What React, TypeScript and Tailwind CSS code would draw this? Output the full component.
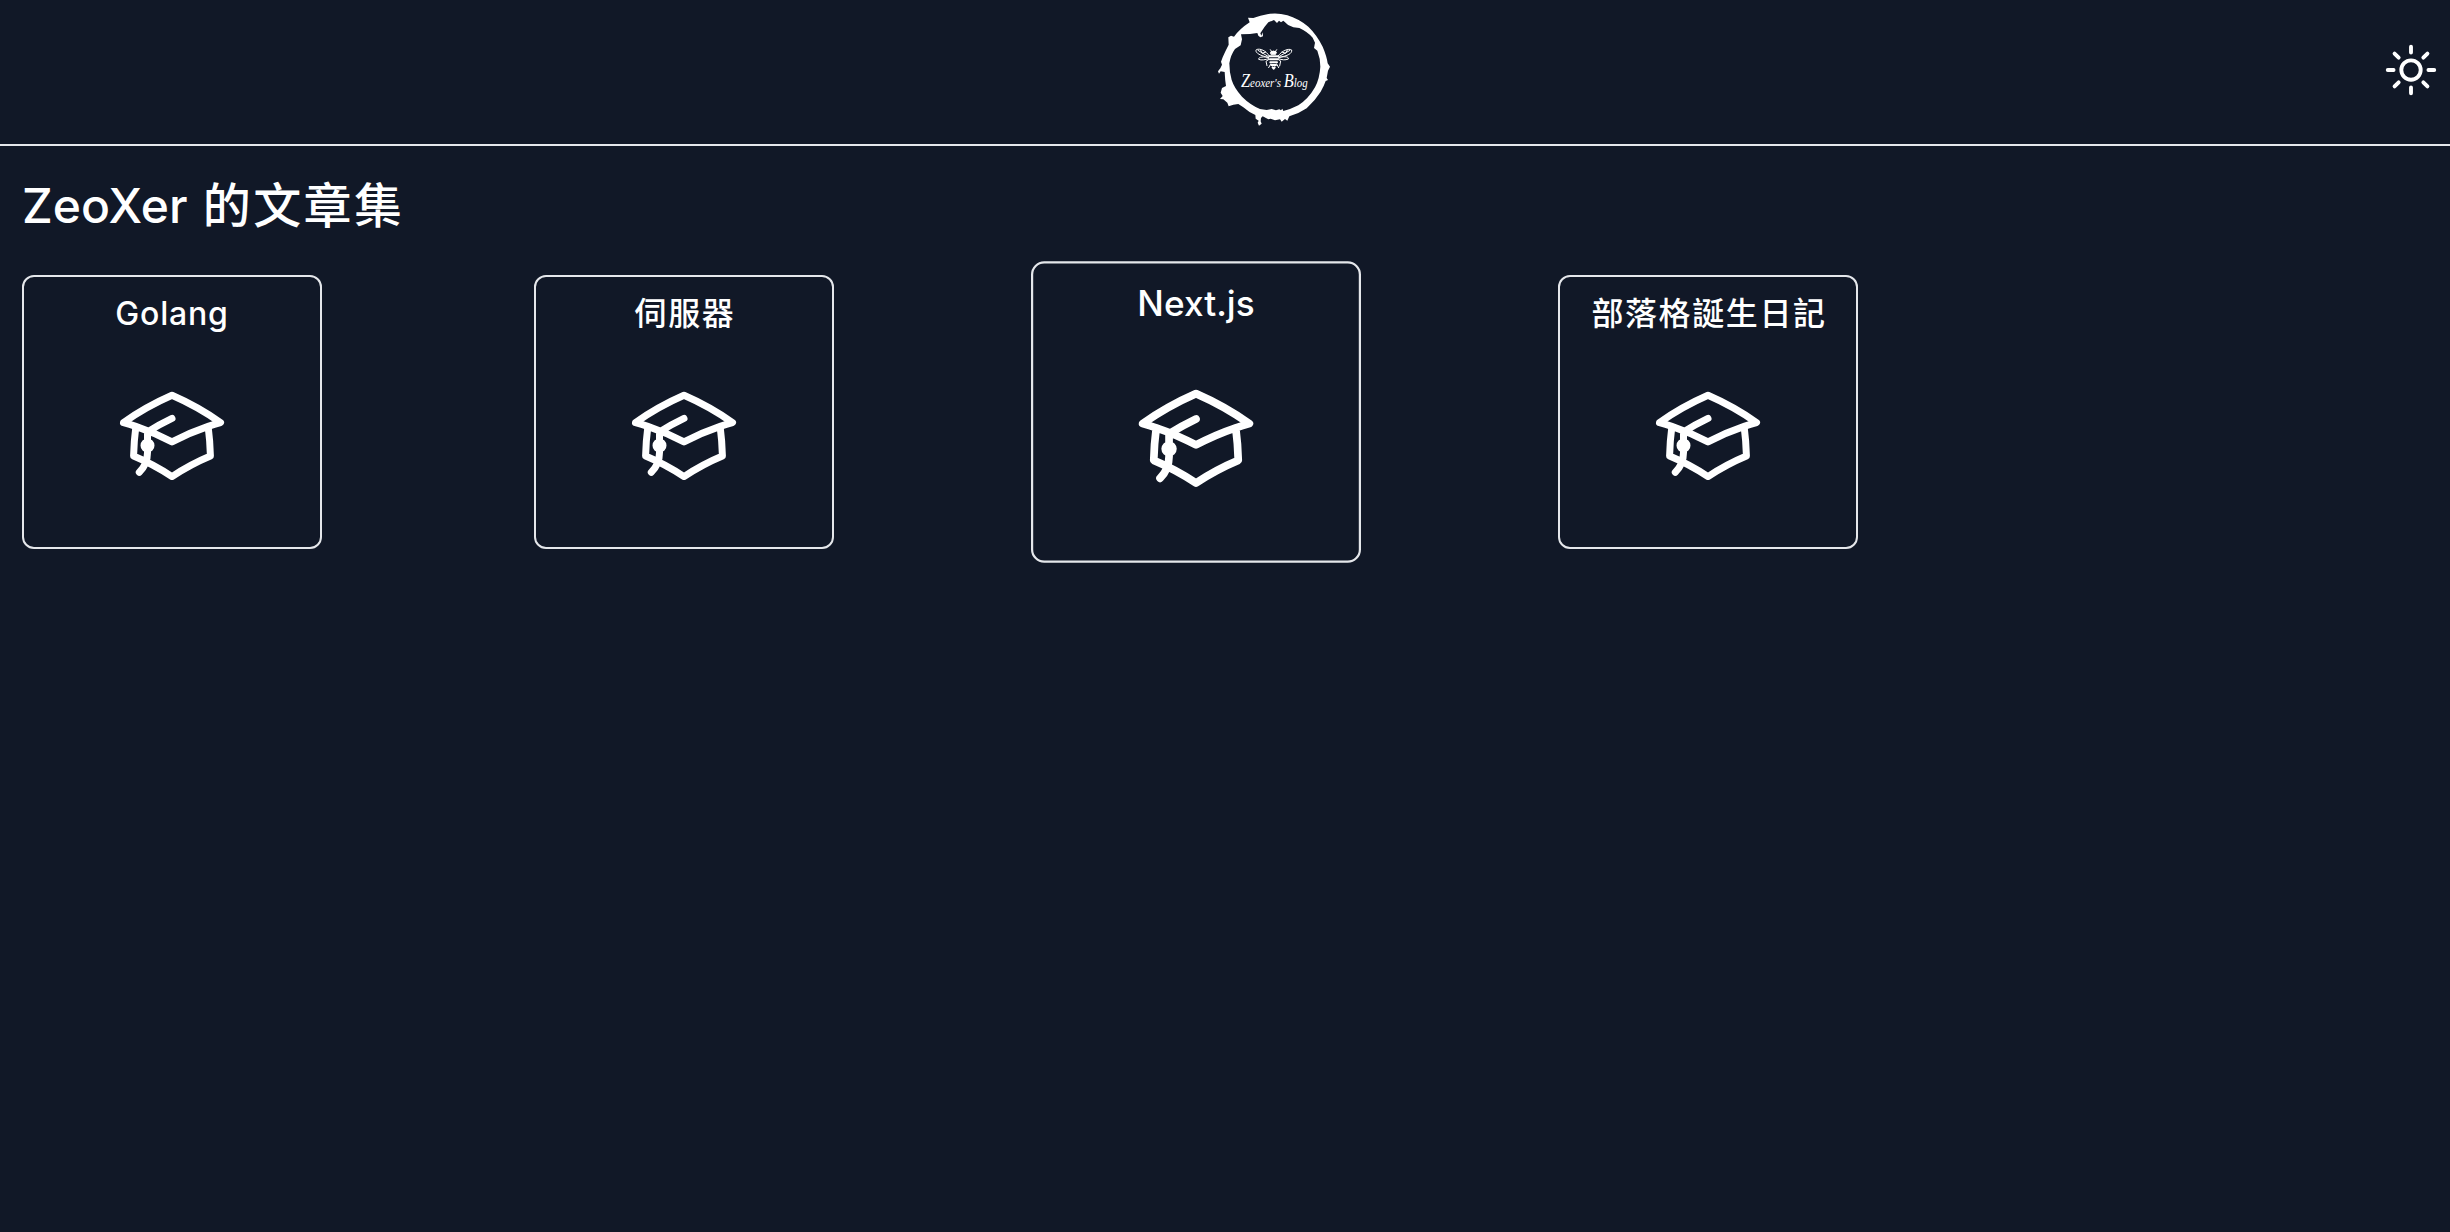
import { HiOutlineAcademicCap, HiOutlineSun } from "react-icons/hi2";

const posts = [
  { title: "Golang", titleClass: "tracking-wide", active: false },
  { title: "伺服器", titleClass: "tracking-wider pl-0.5", active: false },
  { title: "Next.js", titleClass: "tracking-normal", active: true },
  { title: "部落格誕生日記", titleClass: "tracking-wider pl-0.5", active: false },
];

const RING_OUTER =
  "M205 42Q232 37 262 46Q295 56 325 80Q350 104 368 140Q380 168 383 190L390 200L384 212L380 234L384 240L377 243Q372 258 362 275Q345 302 320 325Q295 342 268 349L262 362L255 357L245 365L240 358L225 361L212 356L205 358L188 349L183 354L182 364L185 371L177 377L173 368L176 362L167 356L166 345Q148 338 130 322L115 312L100 314L86 319L82 308L70 298L60 297L68 288L62 278L66 264L78 258Q75 240 74 216L62 214L57 221L54 214L61 205L66 194L63 185Q68 170 77 152L86 134L85 112L93 107L102 110Q120 86 149 67L144 53L160 54Q180 46 205 42Z";
const RING_INNER =
  "M222 60L231 69L237 62L243 67L250 62Q262 76 280 82L298 84Q322 95 338 113L345 128L342 144L352 152Q361 175 361 200Q359 235 345 262Q325 297 295 316Q272 328 250 333L247 326L243 331L238 328L228 331L215 327L200 330L180 327Q150 314 126 290Q103 265 95 240Q88 215 88 190Q92 165 105 147L122 136L126 118L123 103L150 102L172 99L175 107L181 112L189 109L188 97L184 107L181 100L194 80L205 67Z";

function Logo() {
  return (
    <svg viewBox="0 0 450 450" className="size-[150px] shrink-0" fill="none" stroke="#fff">
      <path d={RING_OUTER + RING_INNER} fill="#fff" fillRule="evenodd" stroke="none" />
      <g strokeWidth="3" strokeLinecap="round" strokeLinejoin="round">
        <path d="M208 168C198 152 180 144 169 149C164 156 176 167 206 172M234 168C246 152 266 144 275 150C277 160 264 168 236 172" />
        <path d="M174 151L204 169M182 150L186 160L197 156M270 151L238 169M262 150L257 160L246 156" strokeWidth="3" />
        <path d="M206 173C190 168 174 172 176 178C184 182 196 179 206 176M236 173C252 168 268 170 265 177C256 181 246 180 236 176" />
        <path d="M211 149L216 156M230 149L225 156M207 178L198 184L201 197M234 178L242 183L239 198M212 192L206 203M230 192L236 203" />
        <path d="M212 156Q220 150 229 156L227 163H214Z" fill="#fff" />
        <path d="M208 169H234M210 178H233M211 187H231M214 195H228M218 202L221 206L224 202" strokeWidth="6" />
      </g>
      <text
        x="123"
        y="262"
        textLength="200"
        lengthAdjust="spacingAndGlyphs"
        fill="#fff"
        stroke="none"
        fontSize="36"
        fontStyle="italic"
        fontFamily="'Liberation Serif', serif"
      >
        <tspan fontSize="54">Z</tspan>eoxer's <tspan fontSize="54">B</tspan>log
      </text>
    </svg>
  );
}

type PostCardProps = { title: string; titleClass: string; active: boolean };

function PostCard({ title, titleClass, active }: PostCardProps) {
  return (
    <article
      className={`flex h-[274px] w-[300px] flex-col items-center rounded-xl border-2 border-[#e5e7eb] pt-[13px] ${
        active ? "scale-110" : ""
      }`}
    >
      <h2 className={`text-[32px] leading-[48px] font-medium whitespace-nowrap ${titleClass}`}>{title}</h2>
      <HiOutlineAcademicCap className="mt-[41px] size-28" />
    </article>
  );
}

export default function App() {
  return (
    <div className="min-h-screen bg-[#111827] font-[Inter,'Noto_Sans_CJK_TC',sans-serif] text-white">
      <header className="flex h-[146px] items-start justify-between border-b-2 border-[#e5e7eb] pr-2">
        <div className="w-[170px]" />
        <Logo />
        <HiOutlineSun className="mt-[39px] size-[62px]" />
      </header>
      <main className="px-[22px] pt-6">
        <h1 className="h-[105px] text-5xl leading-[72px] font-medium tracking-wider">
          <span className="tracking-normal">ZeoXer</span> 的文章集
        </h1>
        <section className="flex gap-[212px]">
          {posts.map((post) => (
            <PostCard key={post.title} {...post} />
          ))}
        </section>
      </main>
    </div>
  );
}
